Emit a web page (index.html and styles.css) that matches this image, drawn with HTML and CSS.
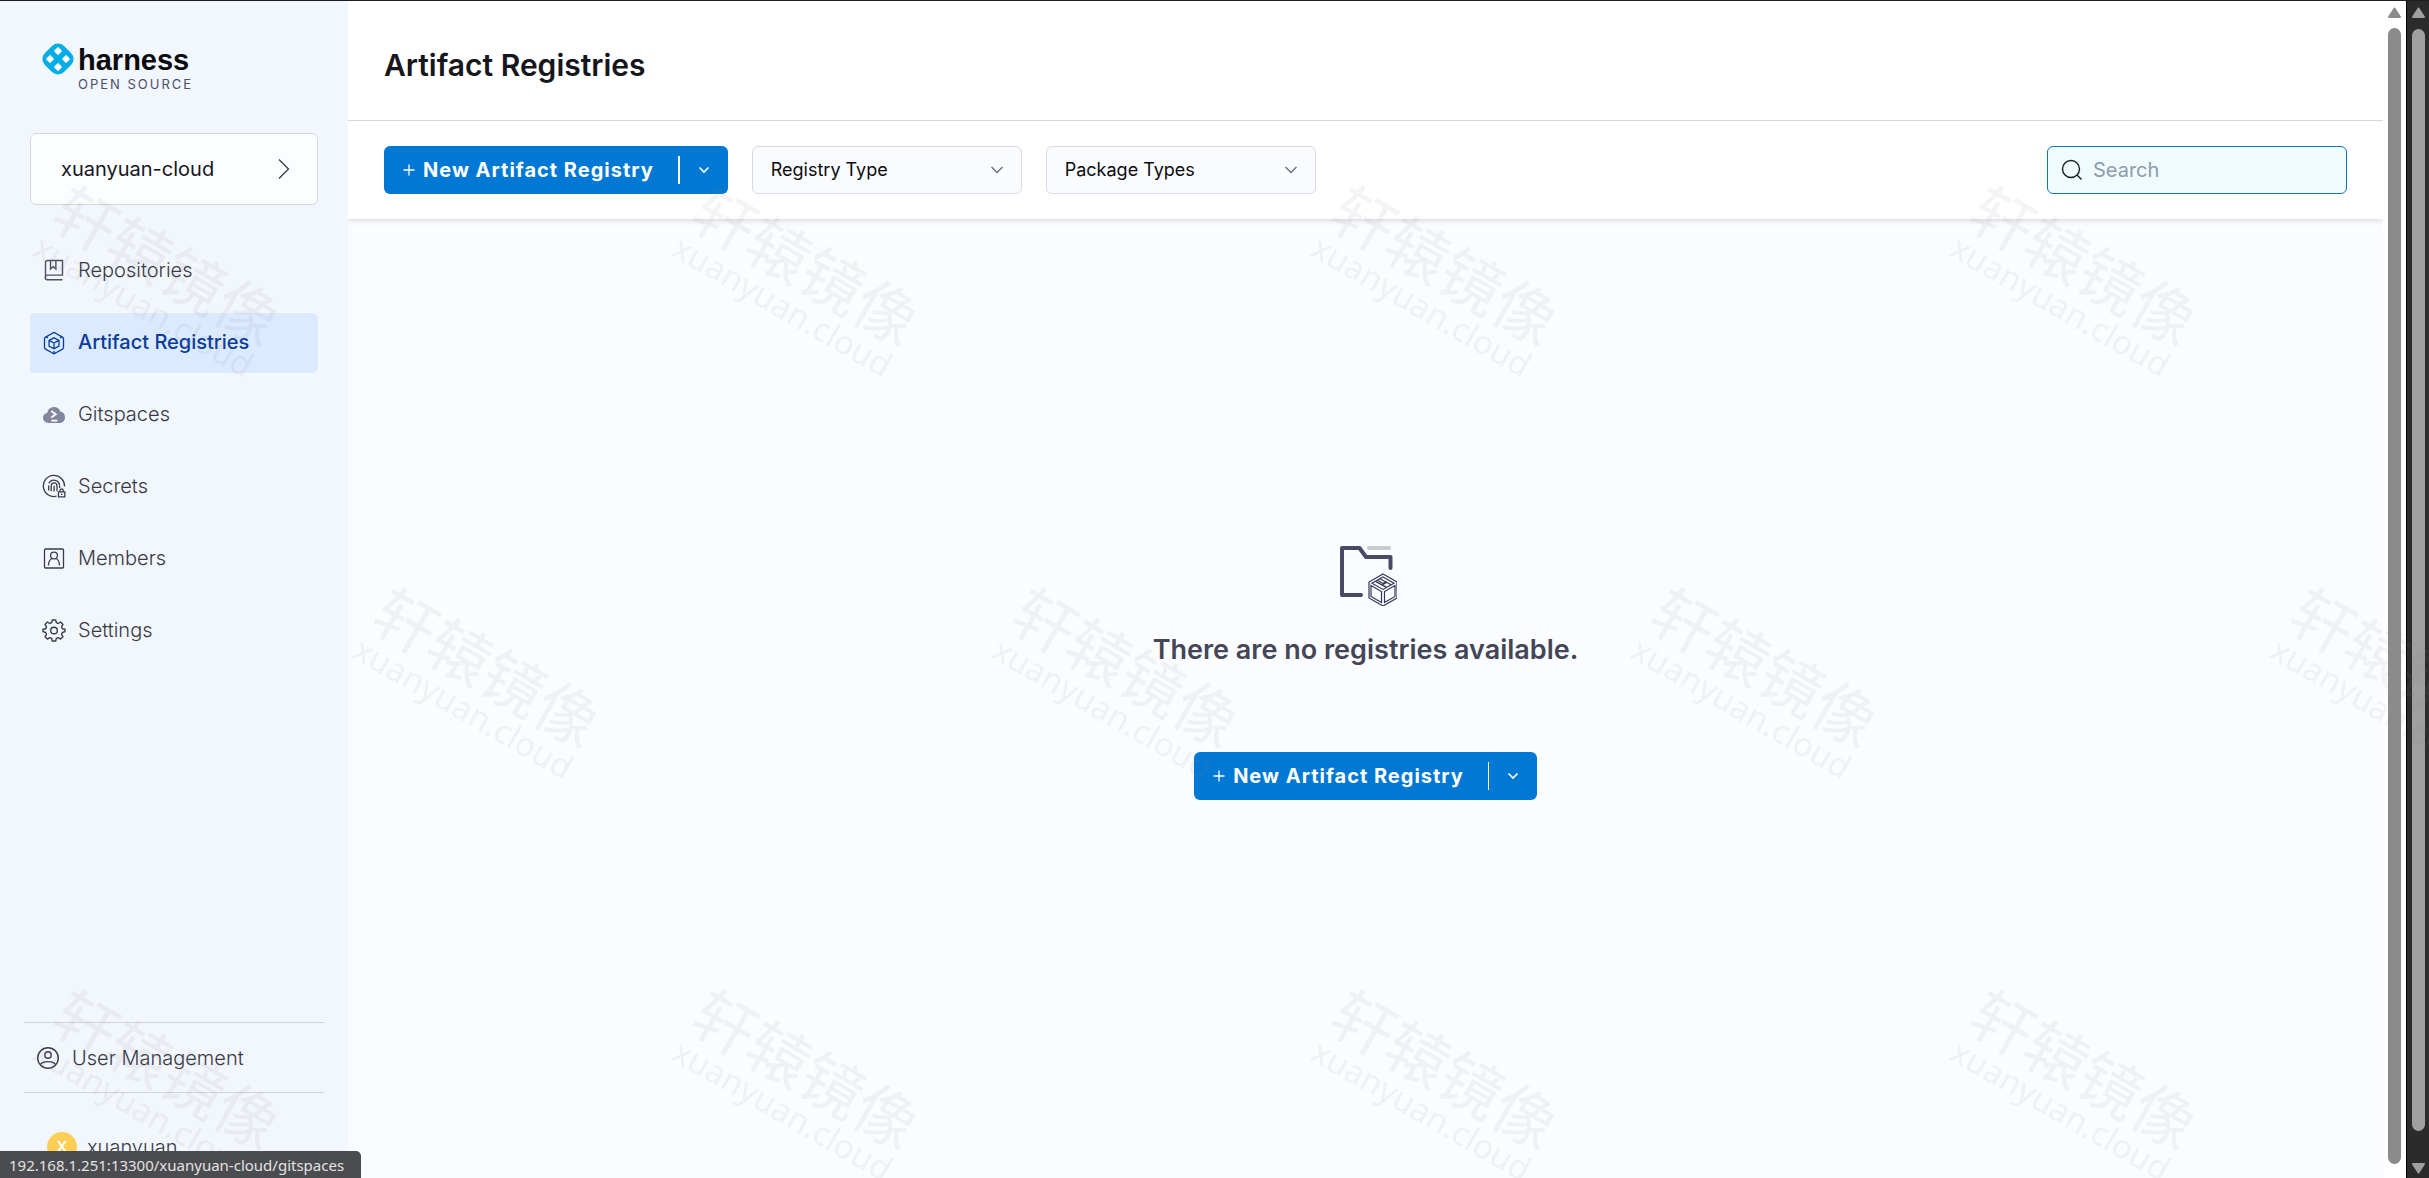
FILE: index.html
```
<!DOCTYPE html>
<html lang="en">
  <head>
    <title>Artifact Registries</title>
    <meta charset="utf-8">
    <link rel="stylesheet" href="styles.css">
  </head>
  <body>

  <aside class="sidebar">
    <div class="logo">
      <svg class="logo-mark" width="32" height="32" viewBox="0 0 32 32">
        <rect x="2.500" y="2.500" width="27" height="27" rx="8.500" fill="#00ade4" transform="rotate(45 16 16)"/>
        <g fill="#fff">
          <rect x="13" y="5" width="6" height="6" rx="1" transform="rotate(45 16 8)"/>
          <rect x="13" y="21" width="6" height="6" rx="1" transform="rotate(45 16 24)"/>
          <rect x="5" y="13" width="6" height="6" rx="1" transform="rotate(45 8 16)"/>
          <rect x="21" y="13" width="6" height="6" rx="1" transform="rotate(45 24 16)"/>
        </g>
      </svg>
      <div class="logo-text">
        <span class="logo-name">harness</span>
        <span class="logo-sub">OPEN SOURCE</span>
      </div>
    </div>

    <button type="button" class="space">
      <span>xuanyuan-cloud</span>
      <svg width="14" height="22" viewBox="0 0 14 22" fill="none" stroke="#383946" stroke-width="1.3"><path d="M2 1.500l9.500 9.500L2 20.500"/></svg>
    </button>

    <nav class="nav">
      <a href="#" class="nav-item">
        <svg width="24" height="24" viewBox="0 0 24 24" fill="none" stroke="#4f5162" stroke-width="1.4"><path d="M20.500 21.700H5.500a2.300 2.300 0 0 1 0-4.600h15V2.500H5.500a2 2 0 0 0-2 2v15M8.500 2.500v8.500l2.700-2.300 2.700 2.300V2.500"/></svg>
        <span>Repositories</span>
      </a>
      <a href="#" class="nav-item active">
        <svg width="24" height="26" viewBox="0 -2 24 26" fill="none" stroke="#0a3c9b" stroke-width="1.300"><path d="M10.500 2.200L3.500 6.100a2 2 0 0 0-1 1.700v8.600a2 2 0 0 0 1 1.700l7 3.900M13.500 2.200l7 3.900a2 2 0 0 1 1 1.700v8.600a2 2 0 0 1-1 1.700l-7 3.900M10 2.400l2-.9 2 .9M10 21.800l2 .9 2-.9M2.500 8v1M21.500 8v1"/><path d="M12 6.800l5 2.600v5.600l-5 2.700-5-2.700V9.400zM7 9.400l5 2.700 5-2.700M12 12.100v5.600"/><path d="M12 20v2.500M4 5.800l2 1.200M20 5.800l-2 1.200"/></svg>
        <span>Artifact Registries</span>
      </a>
      <a href="#" class="nav-item">
        <svg width="24" height="24" viewBox="0 0 24 24"><path d="M6.500 21A5.200 5.200 0 0 1 1 15.800c0-2.700 1.800-4.600 4.300-5.100A6.600 6.600 0 0 1 12 5a6.600 6.600 0 0 1 6.300 4.600c2.800.4 4.700 2.700 4.700 5.600 0 3.400-2.300 5.800-5.500 5.800z" fill="#84859f"/><path d="M9.300 9l4.500 3.300-4.500 3.300M9.300 18.600h6" fill="none" stroke="#fff" stroke-width="1.800"/></svg>
        <span>Gitspaces</span>
      </a>
      <a href="#" class="nav-item">
        <svg width="24" height="24" viewBox="0 0 24 24" fill="none" stroke="#3a3c4e" stroke-width="1.300"><path d="M14.500 22.200A10.600 10.600 0 1 1 22.500 12.500"/><path d="M6.700 16.500v-5M9.200 17.300v-5.500a2.900 2.900 0 0 1 5.800 0v5.500M12.100 11.800v5.800M6.800 9.300a5.700 5.700 0 0 1 10.800 2.400M17.600 12v2"/><path d="M16.500 17.800h6.300v5h-6.300zM18 17.500v-1.400a1.700 1.700 0 0 1 3.300 0v1.400M19.600 19.600v1.500"/></svg>
        <span>Secrets</span>
      </a>
      <a href="#" class="nav-item">
        <svg width="24" height="24" viewBox="0 0 24 24" fill="none" stroke="#3a3c4e" stroke-width="1.300"><rect x="2.500" y="3" width="19" height="19" rx="1"/><circle cx="12" cy="9.500" r="3.400"/><path d="M6.500 19.500c0-3.800 1.500-6.200 3.700-7M17.500 19.500c0-3.800-1.500-6.200-3.700-7"/></svg>
        <span>Members</span>
      </a>
      <a href="#" class="nav-item">
        <svg width="24" height="24" viewBox="0 0 24 24" fill="none" stroke="#3a3c4e" stroke-width="1.400" stroke-linejoin="round"><path d="M10.300 2h3.400l.6 2.700 1.900.8L18.600 4 21 6.400l-1.500 2.400.8 1.900 2.700.6v2.400l-2.700.8-.8 1.900 1.500 2.400-2.400 2.300-2.400-1.500-1.900.8-.6 2.600h-3.400l-.6-2.600-1.900-.8-2.400 1.500L3 18.800l1.500-2.400-.8-1.900-2.700-.8v-2.400l2.700-.6.8-1.900L3 6.400 5.400 4l2.400 1.500 1.900-.8z"/><circle cx="12" cy="12.500" r="3.300"/></svg>
        <span>Settings</span>
      </a>
    </nav>

    <div class="sidebar-footer">
      <a href="#" class="users">
        <svg width="24" height="24" viewBox="0 0 24 24" fill="none" stroke="#3a3c4e" stroke-width="1.400"><circle cx="12" cy="12" r="10.300"/><circle cx="12" cy="9" r="3.200"/><path d="M4.300 18.600c1.500-2.100 4-3 7.700-3s6.200.9 7.700 3"/></svg>
        <span>User Management</span>
      </a>
      <a href="#" class="profile">
        <span class="avatar">X</span>
        <span>xuanyuan</span>
      </a>
    </div>
  </aside>

  <main class="main">
    <header class="header">
      <h1>Artifact Registries</h1>
    </header>

    <div class="toolbar">
      <div class="split-button">
        <button type="button" class="split-main"><svg width="12" height="12" viewBox="0 0 12 12" stroke="#fff" stroke-width="1.300"><path d="M6 .5v11M.5 6h11"/></svg>New Artifact Registry</button>
        <button type="button" class="split-toggle bold-line" aria-label="More"><svg width="12" height="8" viewBox="0 0 12 8" fill="none" stroke="#fff" stroke-width="1.600"><path d="M1.500 1.500L6 6l4.500-4.500"/></svg></button>
      </div>
      <div class="dropdown">
        <select aria-label="Registry Type"><option>Registry Type</option></select>
        <svg width="14" height="10" viewBox="0 0 14 10" fill="none" stroke="#6b6d85" stroke-width="1.400"><path d="M1.500 2L7 7.500 12.500 2"/></svg>
      </div>
      <div class="dropdown">
        <select aria-label="Package Types"><option>Package Types</option></select>
        <svg width="14" height="10" viewBox="0 0 14 10" fill="none" stroke="#6b6d85" stroke-width="1.400"><path d="M1.500 2L7 7.500 12.500 2"/></svg>
      </div>
      <label class="search">
        <svg width="22" height="22" viewBox="0 0 22 22" fill="none" stroke="#1c1c28" stroke-width="1.400"><circle cx="10" cy="10" r="8.500"/><path d="M16 16l4.500 4.500"/></svg>
        <input type="text" placeholder="Search" aria-label="Search">
      </label>
    </div>

    <section class="empty">
      <svg class="empty-icon" width="62" height="62" viewBox="-3 -1 62 62" fill="none">
        <path d="M23 50H4V3h17.500l6.500 9h24.500v11" stroke="#4a4864" stroke-width="4" stroke-linecap="round" stroke-linejoin="round"/>
        <path d="M31 3h20" stroke="#c9c9d0" stroke-width="4" stroke-linecap="round"/>
        <g stroke="#383756" stroke-width="1.200">
          <path d="M45 29l14 8v16l-14 8-14-8V37zM45 32l11 6.200-11 6.200-11-6.200zM33 40.500l10.500 6v11L33 51.500zM57 40.500l-10.500 6v11l10.500-6z"/>
          <path d="M37.500 36.400l11 6M42 33.800l11 6M39.500 35.200l5.500 3.200M45 38.400l3.500-2M44 40l5-2.800"/>
        </g>
      </svg>
      <p>There are no registries available.</p>
      <div class="split-button">
        <button type="button" class="split-main"><svg width="12" height="12" viewBox="0 0 12 12" stroke="#fff" stroke-width="1.300"><path d="M6 .5v11M.5 6h11"/></svg>New Artifact Registry</button>
        <button type="button" class="split-toggle" aria-label="More"><svg width="12" height="8" viewBox="0 0 12 8" fill="none" stroke="#fff" stroke-width="1.600"><path d="M1.500 1.500L6 6l4.500-4.500"/></svg></button>
      </div>
    </section>
  </main>

  <div class="scrollbar inner">
    <svg width="15" height="12" viewBox="0 0 15 12"><path d="M7.500 1.500l5.500 8.500H2z" fill="#8b8b8b" stroke="#8b8b8b" stroke-width="2" stroke-linejoin="round"/></svg>
    <div class="thumb"></div>
  </div>
  <div class="scrollbar outer">
    <svg width="15" height="12" viewBox="0 0 15 12"><path d="M7.500 1.500l5.500 8.500H2z" fill="#9f9f9f" stroke="#9f9f9f" stroke-width="2" stroke-linejoin="round"/></svg>
    <div class="thumb"></div>
    <svg width="15" height="12" viewBox="0 0 15 12"><path d="M7.500 10.500L13 2H2z" fill="#9f9f9f" stroke="#9f9f9f" stroke-width="2" stroke-linejoin="round"/></svg>
  </div>

  <div class="watermark">
    <div class="wm-row">
      <div class="wm"><b>轩辕镜像</b><span>xuanyuan.cloud</span></div>
      <div class="wm"><b>轩辕镜像</b><span>xuanyuan.cloud</span></div>
      <div class="wm"><b>轩辕镜像</b><span>xuanyuan.cloud</span></div>
      <div class="wm"><b>轩辕镜像</b><span>xuanyuan.cloud</span></div>
    </div>
    <div class="wm-row shifted">
      <div class="wm"><b>轩辕镜像</b><span>xuanyuan.cloud</span></div>
      <div class="wm"><b>轩辕镜像</b><span>xuanyuan.cloud</span></div>
      <div class="wm"><b>轩辕镜像</b><span>xuanyuan.cloud</span></div>
      <div class="wm"><b>轩辕镜像</b><span>xuanyuan.cloud</span></div>
    </div>
    <div class="wm-row">
      <div class="wm"><b>轩辕镜像</b><span>xuanyuan.cloud</span></div>
      <div class="wm"><b>轩辕镜像</b><span>xuanyuan.cloud</span></div>
      <div class="wm"><b>轩辕镜像</b><span>xuanyuan.cloud</span></div>
      <div class="wm"><b>轩辕镜像</b><span>xuanyuan.cloud</span></div>
    </div>
  </div>

  <div class="status">192.168.1.251:13300/xuanyuan-cloud/gitspaces</div>

  </body>
</html>
```
FILE: styles.css
```
* {
  box-sizing: border-box;
}
html {
  height: 100%;
}
body {
  margin: 0;
  height: 100%;
  display: flex;
  overflow: hidden;
  border-top: 1px solid #1d1d27;
  background: #fbfcff;
  color: #383946;
  font-family: Inter, sans-serif;
  font-size: 20px;
  line-height: 24px;
}
button, input, select {
  margin: 0;
  border: 0;
  font: inherit;
  color: inherit;
}
a {
  color: inherit;
  text-decoration: none;
}
svg {
  flex: none;
  display: block;
}

/* sidebar */
.sidebar {
  width: 348px;
  flex: none;
  display: flex;
  flex-direction: column;
  padding: 42px 30px 0;
  background: #f2f6fd;
}
.logo {
  display: flex;
  gap: 4px;
  padding-left: 12px;
}
.logo-text {
  display: flex;
  flex-direction: column;
}
.logo-name {
  font: bold 29px/34px "Liberation Sans", Arial, sans-serif;
  color: #0b0b0d;
}
.logo-sub {
  font-size: 13px;
  line-height: 14px;
  letter-spacing: 2px;
  color: #4f4e6b;
}
.space {
  display: flex;
  align-items: center;
  justify-content: space-between;
  height: 72px;
  margin-top: 42px;
  padding: 0 26px 0 30px;
  background: #fcfdff;
  border: 1px solid #d3d6de;
  border-radius: 6px;
  color: #16161d;
}
.nav {
  display: flex;
  flex-direction: column;
  gap: 12px;
  margin-top: 36px;
}
.nav-item {
  display: flex;
  align-items: center;
  gap: 12px;
  height: 60px;
  padding: 0 12px 2px;
  font-weight: 300;
}
.nav-item.active {
  background: #dbeafe;
  border-radius: 3px 6px 6px 3px;
  color: #0a3c9b;
  font-weight: 500;
}
.sidebar-footer {
  margin: auto -6px 0;
  font-weight: 300;
}
.users {
  display: flex;
  align-items: center;
  gap: 12px;
  height: 71px;
  padding: 0 12px;
  border-top: 1px solid #d0d3da;
  border-bottom: 1px solid #d0d3da;
}
.profile {
  display: flex;
  align-items: flex-start;
  gap: 10px;
  height: 85px;
  padding: 39px 23px 0;
}
.profile span {
  line-height: 30px;
}
.avatar {
  width: 30px;
  height: 30px;
  border-radius: 50%;
  background: #fcce56;
  color: #fff;
  font-size: 15px;
  font-weight: 600;
  text-align: center;
}

/* page */
.main {
  flex: 1;
  min-width: 0;
  display: flex;
  flex-direction: column;
}
.header {
  height: 120px;
  display: flex;
  align-items: center;
  padding: 8px 36px 0;
  background: #fff;
  border-bottom: 1px solid #d5d6de;
}
.header h1 {
  margin: 0;
  font-size: 30px;
  line-height: 36px;
  font-weight: 600;
  color: #16161d;
}
.toolbar {
  display: flex;
  align-items: center;
  gap: 24px;
  height: 98px;
  padding: 0 36px;
  background: #fff;
  box-shadow: 0 1px 6px rgba(40, 41, 61, 0.2);
  clip-path: inset(0 0 -10px 0);
}
.split-button {
  display: flex;
  height: 48px;
  border-radius: 6px;
  background: #0278d5;
  color: #fff;
}
.split-main {
  display: flex;
  align-items: center;
  gap: 8px;
  padding: 0 24px 0 19px;
  background: none;
  font-weight: 700;
  letter-spacing: 1px;
}
.split-toggle {
  display: flex;
  align-items: center;
  padding: 0;
  background: none;
}
.split-toggle svg {
  margin: 0 18px;
}
.split-toggle::before {
  content: "";
  width: 1px;
  height: 28px;
  background: #fff;
}
.split-toggle.bold-line::before {
  width: 2px;
}
.dropdown {
  position: relative;
  width: 270px;
}
.dropdown select {
  appearance: none;
  width: 100%;
  height: 48px;
  padding: 0 18px;
  border: 1px solid #d9dae5;
  border-radius: 6px;
  background: #fafbff;
  color: #0b0b0d;
  font-size: 18px;
}
.dropdown svg {
  position: absolute;
  right: 18px;
  top: 19px;
  pointer-events: none;
}
.search {
  display: flex;
  align-items: center;
  gap: 10px;
  width: 300px;
  height: 48px;
  margin-left: auto;
  padding: 0 13px;
  border: 1px solid #1279b5;
  border-radius: 6px;
  background: #effbff;
}
.search input {
  flex: 1;
  min-width: 0;
  padding: 0;
  background: none;
  outline: none;
}
.search input::placeholder {
  color: #8e9bab;
}
.empty {
  flex: 1;
  display: flex;
  flex-direction: column;
  align-items: center;
  padding-top: 325px;
}
.empty p {
  margin: 26px 0 84px;
  font-size: 27px;
  line-height: 36px;
  font-weight: 600;
  color: #434657;
}

/* scrollbars */
.scrollbar {
  width: 23px;
  flex: none;
  display: flex;
  flex-direction: column;
  align-items: center;
  gap: 9px;
  padding-top: 6px;
}
.scrollbar .thumb {
  flex: 1;
  width: 13px;
  border-radius: 7px;
}
.inner {
  padding-bottom: 14px;
  background: #fff;
}
.inner .thumb {
  background: #8b8b8b;
}
.outer {
  gap: 10px;
  padding-bottom: 4px;
  background: #2b2b2b;
  border-left: 1px solid #000;
}
.outer .thumb {
  margin-bottom: 21px;
  background: #9f9f9f;
}

/* tiled text over the whole page */
.watermark {
  position: fixed;
  inset: 0;
  overflow: hidden;
  pointer-events: none;
  padding-top: 79px;
  color: #808080;
  opacity: 0.09;
}
.wm-row {
  display: flex;
  margin-left: -161px;
}
.wm-row.shifted {
  margin-left: 159px;
}
.wm {
  width: 639px;
  height: 402px;
  flex: none;
  display: flex;
  flex-direction: column;
  align-items: center;
  justify-content: center;
  transform: rotate(30deg);
}
.wm b {
  font: 400 62px/60px "Noto Sans CJK SC", sans-serif;
}
.wm span {
  font: 33px/40px "Noto Sans", sans-serif;
}

.status {
  position: fixed;
  left: 0;
  bottom: 0;
  height: 27px;
  padding: 0 17px 0 9px;
  border-top-right-radius: 5px;
  background: #4b4c4f;
  color: #e3e3e3;
  font: 15px/28px "Noto Sans", sans-serif;
}
```
